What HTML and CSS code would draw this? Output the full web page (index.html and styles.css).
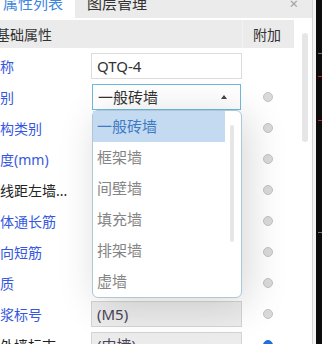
FILE: index.html
```html
<!DOCTYPE html>
<html>
<head>
<meta charset="utf-8">
<link rel="stylesheet" href="styles.css">
</head>
<body>
<div class="win">
  <div class="panel">
    <div class="tabs">
      <div class="tab active">属性列表</div>
      <div class="tab">图层管理</div>
      <div class="tab-fill"><span class="close">×</span></div>
    </div>
    <div class="body">
      <div class="table">
        <div class="head"><div class="h-name">基础属性</div><div class="h-extra">附加</div></div>
        <div class="rows">
          <div class="row"><div class="lbl blue">名称</div><div class="val"><div class="box">QTQ-4</div></div><div class="rad"></div></div>
          <div class="row"><div class="lbl blue">类别</div><div class="val"><div class="box select">一般砖墙<span class="arrow"></span></div></div><div class="rad"><span class="dot"></span></div></div>
          <div class="row"><div class="lbl blue">结构类别</div><div class="val"></div><div class="rad"><span class="dot"></span></div></div>
          <div class="row"><div class="lbl blue">厚度(mm)</div><div class="val"></div><div class="rad"><span class="dot"></span></div></div>
          <div class="row"><div class="lbl">轴线距左墙...</div><div class="val"></div><div class="rad"><span class="dot"></span></div></div>
          <div class="row"><div class="lbl blue">砌体通长筋</div><div class="val"></div><div class="rad"><span class="dot"></span></div></div>
          <div class="row"><div class="lbl blue">横向短筋</div><div class="val"></div><div class="rad"><span class="dot"></span></div></div>
          <div class="row"><div class="lbl blue">材质</div><div class="val"></div><div class="rad"><span class="dot"></span></div></div>
          <div class="row"><div class="lbl blue">砂浆标号</div><div class="val"><div class="box dis">(M5)</div></div><div class="rad"><span class="dot"></span></div></div>
          <div class="row"><div class="lbl">内外墙标志</div><div class="val"><div class="box dis">(内墙)</div></div><div class="rad"><span class="dot on"></span></div></div>
        </div>
      </div>
      <div class="vscroll"><div class="thumb"></div></div>
    </div>
  </div>
  <div class="edge"></div>
  <div class="dark">
    <div class="mk g1"></div>
    <div class="mk r1"></div>
    <div class="mk r2"></div>
    <div class="mk g2"></div>
  </div>
  <div class="dropdown">
    <div class="list">
      <div class="item sel">一般砖墙</div>
      <div class="item">框架墙</div>
      <div class="item">间壁墙</div>
      <div class="item">填充墙</div>
      <div class="item">排架墙</div>
      <div class="item">虚墙</div>
    </div>
    <div class="dscroll"></div>
  </div>
</div>
</body>
</html>
```
FILE: styles.css
```css
* { box-sizing: border-box; }
html, body { margin: 0; padding: 0; background: #fff; }
body {
  font-family: "Noto Sans", "Noto Sans CJK SC", sans-serif;
  color: #333;
  overflow: hidden;
}
.win {
  position: relative;
  width: 322px;
  height: 344px;
  overflow: hidden;
  display: flex;
}
.panel {
  width: 312px;
  display: flex;
  flex-direction: column;
}
.tabs {
  display: flex;
  height: 25px;
  margin-top: -7px;
  background: #ebebeb;
  font-size: 15px;
  line-height: 20px;
  flex-shrink: 0;
}
.tab {
  padding-left: 12px;
  width: 86px;
  color: #333;
}
.tab.active {
  width: 75px;
  padding-left: 3px;
  background: #fff;
  color: #3d86e0;
}
.tab-fill {
  flex: 1;
  display: flex;
  justify-content: flex-end;
}
.close {
  color: #a0a0a0;
  font-size: 15px;
  margin-right: 14px;
}
.body {
  display: flex;
  flex: 1;
  min-height: 0;
}
.table {
  width: 294px;
  flex-shrink: 0;
  display: flex;
  flex-direction: column;
}
.head {
  flex-shrink: 0;
  margin-top: 2px;
  height: 28px;
  background: #ebebeb;
  display: grid;
  grid-template-columns: 242px 52px;
  align-items: center;
  font-size: 14px;
}
.h-name { margin-left: -4px; color: #333; }
.h-extra {
  height: 100%;
  display: flex;
  align-items: center;
  padding-left: 10px;
  border-left: 1px solid #f2f2f2;
  color: #333;
}
.rows { margin-top: 2px; flex-shrink: 0; }
.row {
  display: grid;
  grid-template-columns: 91px 151px 52px;
  height: 31px;
  align-items: center;
}
.lbl {
  margin-left: -14px;
  font-size: 14px;
  white-space: nowrap;
  overflow: hidden;
  color: #222;
}
.lbl.blue { color: #3658e0; }
.val { height: 100%; display: flex; align-items: center; }
.box {
  width: 151px;
  height: 26px;
  border: 1px solid #dcdcdc;
  background: #fff;
  font-size: 15px;
  line-height: 24px;
  padding-left: 5px;
  color: #333;
}
.box.select {
  width: 149px;
  margin-left: 1px;
  border-color: #6fb9de;
  display: flex;
  align-items: center;
  justify-content: space-between;
  padding-right: 13px;
}
.arrow {
  width: 0;
  height: 0;
  border-left: 3px solid transparent;
  border-right: 3px solid transparent;
  border-bottom: 4px solid #444;
}
.box.dis {
  background: #ececec;
  border-color: #d4d4d4;
  color: #4a4458;
}
.rad { display: flex; justify-content: center; align-items: center; }
.dot {
  width: 10px;
  height: 10px;
  border-radius: 50%;
  background: #dadada;
  border: 1px solid #c2c2c2;
}
.dot.on { background: #1f6fe0; border-color: #1f6fe0; }
.vscroll { flex: 1; padding-left: 8px; }
.thumb {
  margin-top: 15px;
  width: 6px;
  height: 109px;
  background: #e6e6e6;
  border-radius: 3px;
}
.edge {
  width: 4px;
  border-left: 1px solid #d6d6d6;
  background: #f4f4f4;
}
.dark {
  width: 6px;
  background: #0d0d0d;
  display: flex;
  flex-direction: column;
}
.mk { height: 1px; margin-left: 2px; }
.g1 { margin-top: 53px; background: #7a7a7a; }
.r1 { margin-top: 22px; background: #d02020; }
.r2 { margin-top: 43px; background: #d02020; }
.g2 { margin-top: 111px; background: #7a7a7a; }
.dropdown {
  position: absolute;
  left: 92px;
  top: 110px;
  width: 150px;
  height: 188px;
  background: #fff;
  border: 1px solid #abc7d8;
  border-radius: 6px;
  box-shadow: 6px 6px 40px rgba(0, 0, 0, 0.16);
  display: flex;
}
.list { width: 132px; }
.item {
  height: 31px;
  line-height: 31px;
  padding-left: 4px;
  font-size: 15px;
  color: #858585;
}
.item.sel { background: #c4daf1; color: #3f7ac4; }
.dscroll {
  margin-top: 14px;
  margin-left: 5px;
  width: 4px;
  height: 117px;
  background: #e6e6e6;
  border-radius: 2px;
}
```
